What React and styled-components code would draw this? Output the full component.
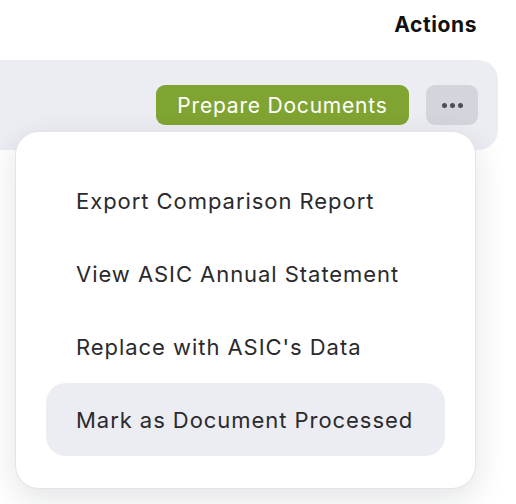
import React from 'react';
import styled, { createGlobalStyle } from 'styled-components';

const GlobalStyle = createGlobalStyle`
  html, body {
    margin: 0;
    padding: 0;
    background: #ffffff;
    font-family: Inter, "Open Sans", sans-serif;
  }
`;

const Page = styled.div`
  width: 516px;
  height: 504px;
  overflow: hidden;
  position: relative;
`;

const HeaderBar = styled.div`
  display: flex;
  justify-content: flex-end;
  height: 60px;
  padding-right: 39px;
  box-sizing: border-box;
`;

const ColumnTitle = styled.div`
  font-weight: 700;
  font-size: 21px;
  letter-spacing: 0.6px;
  color: #111;
  line-height: 49px;
`;

const Row = styled.div`
  position: relative;
  margin-right: 18px;
  margin-left: -20px;
  height: 90px;
  background: #ecedf2;
  border-radius: 20px;
  display: flex;
  justify-content: flex-end;
  align-items: center;
  gap: 17px;
  padding-right: 20px;
  box-sizing: border-box;
`;

const PrimaryButton = styled.button`
  height: 40px;
  width: 253px;
  border: none;
  border-radius: 9px;
  background: #7fa432;
  color: #fff;
  font-family: inherit;
  font-size: 21px;
  letter-spacing: 0.8px;
  padding: 0;
`;

const MoreButton = styled.button`
  width: 52px;
  height: 40px;
  border: none;
  border-radius: 9px;
  background: #d4d5dc;
  display: flex;
  align-items: center;
  justify-content: center;
  gap: 3px;
  padding: 0;
`;

const Dot = styled.span`
  width: 5px;
  height: 5px;
  border-radius: 50%;
  background: #4f5057;
`;

const Menu = styled.div`
  position: absolute;
  top: 71px;
  right: 22px;
  width: 461px;
  box-sizing: border-box;
  background: #fff;
  border: 1px solid #e3e4e8;
  border-radius: 24px;
  box-shadow: 0 10px 32px rgba(20, 22, 40, 0.12);
  padding: 32px 30px 32px 30px;
  display: flex;
  flex-direction: column;
  z-index: 2;
`;

const MenuItem = styled.div`
  height: 73px;
  display: flex;
  align-items: center;
  padding-left: 30px;
  border-radius: 20px;
  font-size: 22px;
  letter-spacing: 0.95px;
  color: #2a2a2e;
  background: ${p => (p.active ? '#ecedf2' : 'transparent')};
`;

const items = [
  'Export Comparison Report',
  'View ASIC Annual Statement',
  "Replace with ASIC's Data",
  'Mark as Document Processed',
];

export default function App() {
  return (
    <Page>
      <GlobalStyle />
      <HeaderBar>
        <ColumnTitle>Actions</ColumnTitle>
      </HeaderBar>
      <Row>
        <PrimaryButton>Prepare Documents</PrimaryButton>
        <MoreButton>
          <Dot />
          <Dot />
          <Dot />
        </MoreButton>
        <Menu>
          {items.map((label, i) => (
            <MenuItem key={label} active={i === items.length - 1}>
              {label}
            </MenuItem>
          ))}
        </Menu>
      </Row>
    </Page>
  );
}
